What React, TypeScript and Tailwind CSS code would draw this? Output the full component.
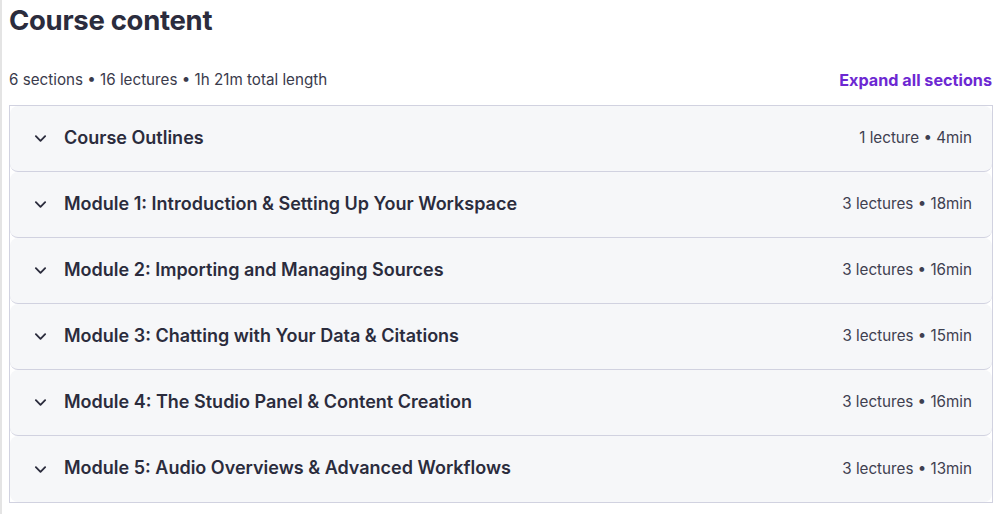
import React from "react";

const sections = [
  { title: "Course Outlines", meta: "1 lecture • 4min" },
  { title: "Module 1: Introduction & Setting Up Your Workspace", meta: "3 lectures • 18min" },
  { title: "Module 2: Importing and Managing Sources", meta: "3 lectures • 16min" },
  { title: "Module 3: Chatting with Your Data & Citations", meta: "3 lectures • 15min" },
  { title: "Module 4: The Studio Panel & Content Creation", meta: "3 lectures • 16min" },
  { title: "Module 5: Audio Overviews & Advanced Workflows", meta: "3 lectures • 13min" },
];

function Chevron() {
  return (
    <svg width="13" height="9" viewBox="5 8 14 9" fill="none" stroke="#2b2c3d" strokeWidth="2" strokeLinecap="round" strokeLinejoin="round">
      <path d="M7 10l5 5 5-5" />
    </svg>
  );
}

export default function App() {
  return (
    <div className="min-h-[514px] w-[999px] bg-white border-l-2 border-[#e4e4e4] text-[#2b2c3d]" style={{ fontFamily: "Inter, 'Noto Sans', sans-serif" }}>
      <div className="pl-[7px] pr-[7px]">
        <h2 className="text-[27.5px] leading-[40px] font-bold tracking-[-0.3px] text-[#2b2c3d]">Course content</h2>
        <div className="mt-[30px] flex items-center justify-between h-[20px]">
          <span className="text-[15.2px] text-[#3a3b4c]">6 sections • 16 lectures • 1h 21m total length</span>
          <span className="text-[16.2px] font-bold text-[#6d28d2]">Expand all sections</span>
        </div>
        <div className="mt-[15px] w-[984px] border border-[#d1d2e0]">
          {sections.map((s, i) => (
            <div key={i} className={`h-[66px] bg-[#f6f7f9] rounded-lg flex items-center pl-[24px] pr-[20px] ${i < sections.length - 1 ? "border-b border-[#d1d2e0]" : ""}`}>
              <span className="w-[13px] flex items-center mr-[17px]"><Chevron /></span>
              <span className="text-[18px] font-semibold text-[#2b2c3d] flex-1 leading-[24px] pb-[2px]">{s.title}</span>
              <span className="text-[15.2px] text-[#3e4050]">{s.meta}</span>
            </div>
          ))}
        </div>
      </div>
    </div>
  );
}
